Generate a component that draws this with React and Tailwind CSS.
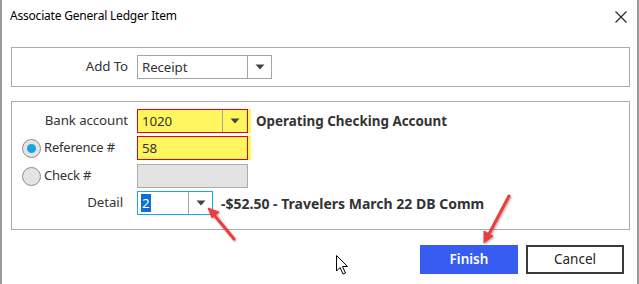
import React from "react";

const Caret = () => (
  <svg width="10" height="6" viewBox="0 0 10 6"><path d="M0.5 0.5 L9.5 0.5 L5 5.5 Z" fill="#444" /></svg>
);

const Radio = ({ checked }) => (
  <div className="w-[19px] h-[19px] rounded-full border border-[#8c8c8c] bg-[#e4e4e4] flex items-center justify-center shrink-0">
    {checked && <div className="w-[9px] h-[9px] rounded-full bg-[#14a3e3]" />}
  </div>
);

export default function App() {
  return (
    <div className="relative w-[639px] h-[284px] bg-white border-l-2 border-r-2 border-[#9a9a9a] overflow-hidden text-[#333]" style={{ fontFamily: '"Noto Sans", "Open Sans", sans-serif' }}>
      {/* Title bar */}
      <div className="flex items-center justify-between h-[32px] pl-[8px] pr-[10px]">
        <span className="text-[12px] text-black tracking-[-0.2px]">Associate General Ledger Item</span>
        <svg width="12" height="12" viewBox="0 0 12 12" className="mt-[1px]"><path d="M0.5 0.5 L11.5 11.5 M11.5 0.5 L0.5 11.5" stroke="#222" strokeWidth="1.1" /></svg>
      </div>

      <div className="pl-[9px] pr-[7px] pt-[15px]">
        {/* Group 1 */}
        <div className="h-[40px] border border-[#ababab] flex items-center">
          <div className="w-[125px] pr-[9px] text-right text-[13.3px] tracking-[-0.1px]">Add To</div>
          <div className="w-[135px] h-[24px] border border-[#a5a5a5] flex">
            <div className="flex-1 pl-[4px] text-[13.3px] leading-[22px] text-[#333] tracking-[-0.1px]">Receipt</div>
            <div className="w-[24px] border-l border-[#a5a5a5] flex items-center justify-center"><Caret /></div>
          </div>
        </div>

        {/* Group 2 */}
        <div className="mt-[14px] h-[129px] border border-[#ababab] pt-[7px] flex flex-col">
          {/* Bank account */}
          <div className="flex items-center h-[24px]">
            <div className="w-[125px] pr-[9px] text-right text-[13.3px] tracking-[-0.1px]">Bank account</div>
            <div className="bg-[#fff55e] pr-[3px] flex">
              <div className="w-[111px] h-[24px] border border-[#e8000b] flex">
                <div className="flex-1 pl-[4px] text-[13.3px] leading-[22px] tracking-[-0.1px]">1020</div>
                <div className="w-[25px] border-l border-[#a5a5a5] flex items-center justify-center"><Caret /></div>
              </div>
            </div>
            <div className="ml-[5px] text-[13.4px] font-bold">Operating Checking Account</div>
          </div>
          {/* Reference */}
          <div className="flex items-center h-[24px] mt-[3px]">
            <div className="w-[125px] pl-[10px] flex items-center gap-[3px]">
              <Radio checked />
              <span className="text-[13px] tracking-[-0.2px]">Reference #</span>
            </div>
            <div className="bg-[#fff55e] pr-[3px] flex">
              <div className="w-[111px] h-[24px] border border-[#e8000b] pl-[4px] text-[13.3px] leading-[22px] tracking-[-0.1px]">58</div>
            </div>
          </div>
          {/* Check */}
          <div className="flex items-center h-[24px] mt-[4px]">
            <div className="w-[125px] pl-[10px] flex items-center gap-[3px]">
              <Radio />
              <span className="text-[13px] tracking-[-0.2px]">Check #</span>
            </div>
            <div className="w-[111px] h-[24px] border border-[#ababab] bg-[#e3e3e3]" />
          </div>
          {/* Detail */}
          <div className="flex items-center h-[24px] mt-[3px]">
            <div className="w-[125px] pr-[14px] text-right text-[13.3px] tracking-[-0.1px]">Detail</div>
            <div className="w-[76px] h-[24px] border border-[#1ea7e0] flex">
              <div className="flex-1 pl-[3px] flex items-center">
                <span className="bg-[#0a6fd6] text-white text-[13.3px] leading-[18px] px-[1px]">2</span>
              </div>
              <div className="w-[24px] border-l border-[#a5a5a5] flex items-center justify-center"><Caret /></div>
            </div>
            <div className="ml-[8px] text-[14px] font-bold">-$52.50 - Travelers March 22 DB Comm</div>
          </div>
        </div>

        {/* Buttons */}
        <div className="flex justify-end gap-[8px] mt-[15px] pr-[6px]">
          <div className="w-[98px] h-[29px] bg-[#375cf2] text-white text-[13.5px] font-semibold flex items-center justify-center">Finish</div>
          <div className="w-[98px] h-[29px] border-2 border-[#3a3a3a] text-[#222] text-[13.5px] flex items-center justify-center">Cancel</div>
        </div>
      </div>

      {/* Annotation arrows */}
      <svg className="absolute left-0 top-0 pointer-events-none" width="639" height="284" viewBox="0 0 639 284">
        <defs>
          <filter id="sh" x="-20%" y="-20%" width="140%" height="140%">
            <feDropShadow dx="1" dy="1" stdDeviation="1" floodColor="#000" floodOpacity="0.35" />
          </filter>
        </defs>
        <g filter="url(#sh)" fill="#ec3d3d" stroke="#ec3d3d">
          <line x1="232" y1="239" x2="213" y2="216" strokeWidth="3" strokeLinecap="round" />
          <path d="M206 208 L217 212 L210 218 Z" strokeWidth="1" />
          <line x1="507" y1="196" x2="487" y2="234" strokeWidth="3" strokeLinecap="round" />
          <path d="M482 243 L482 231 L491 236 Z" strokeWidth="1" />
        </g>
        {/* mouse cursor */}
        <path d="M334.5 255.5 L334.5 271 L338 267.5 L341 274 L343.5 273 L340.5 266.5 L345.5 266.5 Z" fill="#fff" stroke="#000" strokeWidth="1" strokeLinejoin="round" />
      </svg>
    </div>
  );
}
